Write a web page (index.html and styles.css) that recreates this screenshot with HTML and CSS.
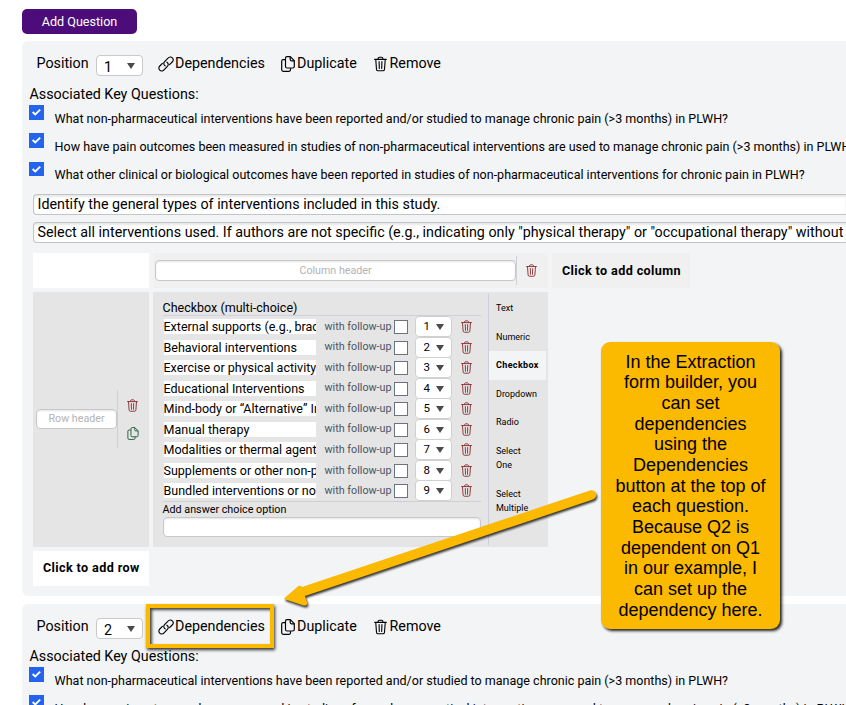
FILE: index.html
```html
<!DOCTYPE html>
<html lang="en">
<head>
<meta charset="utf-8">
<title>Extraction form builder</title>
<link rel="stylesheet" href="styles.css">
</head>
<body>
<svg class="defs" aria-hidden="true">
  <symbol id="link" viewBox="0 0 16 16"><g fill="none" stroke="currentColor" stroke-width="1.15" stroke-linecap="round"><path d="M7.2 9.9C5.6 8.9 5.3 7 6.6 5.600L10 2.100C11.200.8 13.100.6 14.300 1.800C15.500 3 15.400 4.800 14.200 6L11.600 8.600"/><path d="M8.900 6.200C10.500 7.200 10.700 9 9.400 10.400L6 13.900C4.800 15.200 2.900 15.400 1.700 14.200C.5 13 .6 11.200 1.800 10L4.400 7.400"/></g></symbol>
  <symbol id="copy" viewBox="0 0 14 16"><g fill="none" stroke="currentColor" stroke-width="1.2" stroke-linejoin="round"><path d="M6 .7H9.300L13.300 4.700V10.500Q13.300 12 11.800 12H6Q4.500 12 4.500 10.500V2.200Q4.500.7 6 .7Z"/><path d="M9.200.8V3.600Q9.200 4.800 10.400 4.800H13.200"/><path d="M4.400 3.700H2.200Q.7 3.700.7 5.200V13.800Q.7 15.300 2.200 15.300H8Q9.500 15.300 9.500 13.800V12.200"/></g></symbol>
  <symbol id="trash" viewBox="0 0 14 16"><g fill="none" stroke="currentColor" stroke-width="1.2" stroke-linecap="round"><path d="M.7 3H13.300M4.300 2.800Q4.300.8 5.800.8H8.200Q9.700.8 9.700 2.800M1.900 3.200L2.700 13.800Q2.900 15.300 4.300 15.300H9.700Q11.100 15.300 11.300 13.800L12.100 3.200M5.500 5.500L5.700 12.800M8.500 5.500L8.300 12.800"/></g></symbol>
  <symbol id="check" viewBox="0 0 15 15"><path d="M3.500 7.300L6.200 9.800L11.300 4.800" fill="none" stroke="#fff" stroke-width="2"/></symbol>
</svg>
<button class="add-question">Add Question</button>

<section class="card first">
  <div class="toolbar">
    <span class="position">Position</span><span class="select big">1</span>
    <span class="action dep"><svg><use href="#link"/></svg>Dependencies</span>
    <span class="action dup"><svg><use href="#copy"/></svg>Duplicate</span>
    <span class="action"><svg><use href="#trash"/></svg>Remove</span>
  </div>
  <div class="key-title">Associated Key Questions:</div>
  <div class="key"><svg><use href="#check"/></svg><span>What non-pharmaceutical interventions have been reported and/or studied to manage chronic pain (&gt;3 months) in PLWH?</span></div>
  <div class="key"><svg><use href="#check"/></svg><span>How have pain outcomes been measured in studies of non-pharmaceutical interventions are used to manage chronic pain (&gt;3 months) in PLWH?</span></div>
  <div class="key"><svg><use href="#check"/></svg><span>What other clinical or biological outcomes have been reported in studies of non-pharmaceutical interventions for chronic pain in PLWH?</span></div>
  <div class="text-input">Identify the general types of interventions included in this study.</div>
  <div class="text-input">Select all interventions used. If authors are not specific (e.g., indicating only "physical therapy" or "occupational therapy" without</div>

  <div class="matrix">
    <div class="corner"></div>
    <div class="col-head"><span class="field">Column header</span><span class="col-tools"><svg class="red"><use href="#trash"/></svg></span></div>
    <div class="add-col">Click to add column</div>
    <div class="row-head">
      <span class="field">Row header</span>
      <span class="row-tools"><svg class="red"><use href="#trash"/></svg><svg class="green"><use href="#copy"/></svg></span>
    </div>
    <div class="cell">
      <div class="answers">
        <div class="answers-title">Checkbox (multi-choice)</div>
        <div class="options">
          <div class="option"><span class="name">External supports (e.g., brac</span><span class="follow">with follow-up</span><i></i><span class="select">1</span><svg class="red"><use href="#trash"/></svg></div>
          <div class="option"><span class="name">Behavioral interventions</span><span class="follow">with follow-up</span><i></i><span class="select">2</span><svg class="red"><use href="#trash"/></svg></div>
          <div class="option"><span class="name">Exercise or physical activity</span><span class="follow">with follow-up</span><i></i><span class="select">3</span><svg class="red"><use href="#trash"/></svg></div>
          <div class="option"><span class="name">Educational Interventions</span><span class="follow">with follow-up</span><i></i><span class="select">4</span><svg class="red"><use href="#trash"/></svg></div>
          <div class="option"><span class="name">Mind-body or “Alternative” In</span><span class="follow">with follow-up</span><i></i><span class="select">5</span><svg class="red"><use href="#trash"/></svg></div>
          <div class="option"><span class="name">Manual therapy</span><span class="follow">with follow-up</span><i></i><span class="select">6</span><svg class="red"><use href="#trash"/></svg></div>
          <div class="option"><span class="name">Modalities or thermal agent</span><span class="follow">with follow-up</span><i></i><span class="select">7</span><svg class="red"><use href="#trash"/></svg></div>
          <div class="option"><span class="name">Supplements or other non-p</span><span class="follow">with follow-up</span><i></i><span class="select">8</span><svg class="red"><use href="#trash"/></svg></div>
          <div class="option"><span class="name">Bundled interventions or no</span><span class="follow">with follow-up</span><i></i><span class="select">9</span><svg class="red"><use href="#trash"/></svg></div>
        </div>
        <div class="add-option">Add answer choice option</div>
        <div class="field add-field"></div>
      </div>
      <div class="types">
        <span>Text</span><span>Numeric</span><span class="active">Checkbox</span><span>Dropdown</span><span>Radio</span><span>Select<br>One</span><span>Select<br>Multiple</span>
      </div>
    </div>
    <div class="add-row">Click to add row</div>
  </div>
</section>

<section class="card second">
  <div class="toolbar">
    <span class="position">Position</span><span class="select big">2</span>
    <span class="action dep"><svg><use href="#link"/></svg>Dependencies</span>
    <span class="action dup"><svg><use href="#copy"/></svg>Duplicate</span>
    <span class="action"><svg><use href="#trash"/></svg>Remove</span>
  </div>
  <div class="key-title">Associated Key Questions:</div>
  <div class="key"><svg><use href="#check"/></svg><span>What non-pharmaceutical interventions have been reported and/or studied to manage chronic pain (&gt;3 months) in PLWH?</span></div>
  <div class="key"><svg><use href="#check"/></svg><span>How have pain outcomes been measured in studies of non-pharmaceutical interventions are used to manage chronic pain (&gt;3 months) in PLWH?</span></div>
</section>

<div class="highlight"></div>
<svg class="arrow" viewBox="0 0 330 130"><path d="M310.500 14L24 110" fill="none" stroke="#fbb900" stroke-width="9.500" stroke-linecap="round"/><path d="M4 117.500L18 105.500Q20 105 20.500 107L25.500 122Q25.800 124 23 123.800Z" fill="#fbb900" stroke="#fbb900" stroke-width="1.500" stroke-linejoin="round"/></svg>
<div class="callout">In the Extraction<br>form builder, you<br>can set<br>dependencies<br>using the<br>Dependencies<br>button at the top of<br>each question.<br>Because Q2 is<br>dependent on Q1<br>in our example, I<br>can set up the<br>dependency here.</div>
</body>
</html>
```
FILE: styles.css
```css
* { box-sizing: border-box; }
html { overflow: hidden; }
body {
  margin: 0;
  padding: 9px 0 0 22px;
  width: 846px;
  height: 705px;
  overflow: hidden;
  position: relative;
  background: #fff;
  color: #000;
  font: 12.53px "Roboto", sans-serif;
}
svg { display: block; flex: none; }
.defs { position: absolute; width: 0; height: 0; }
.add-question {
  display: block;
  width: 115px;
  height: 25px;
  padding: 0;
  border: 0;
  border-radius: 5px;
  background: #4c0d7b;
  color: #fff;
  font: 400 12.6px "Roboto", sans-serif;
}
.card {
  width: 824px;
  background: #f3f4f6;
  border-radius: 6px 0 0 6px;
  overflow: hidden;
}
.card.first { margin-top: 7px; height: 555px; }
.card.second { margin-top: 8px; height: 101px; border-radius: 6px 0 0 0; }
.toolbar {
  display: flex;
  height: 45px;
  padding-left: 14.5px;
  font-size: 14.3px;
  line-height: 18px;
}
.second .toolbar { height: 44px; }
.position { width: 59.5px; padding-top: 13px; }
.select {
  position: relative;
  background: #fff;
  border: 1px solid #c9c9c9;
  border-radius: 4px;
}
.select::after {
  content: "";
  position: absolute;
  border: 4px solid transparent;
  border-top: 6px solid #4a4a4a;
  border-bottom: 0;
}
.big {
  width: 47px;
  height: 21px;
  margin: 14px 15px 0 0;
  padding-left: 7px;
  line-height: 22px;
}
.big::after { right: 7px; top: 7px; }
.action { display: flex; padding-top: 13px; }
.action svg { width: 13px; height: 16px; margin: 2px 2.500px 0 0; }
.dep { width: 123px; }
.dep svg { width: 16px; margin-right: 1px; }
.dup { width: 93px; }
.dup svg { width: 14px; margin-right: 2px; }
.key-title {
  height: 19px;
  padding-left: 7.5px;
  font-size: 14.3px;
  line-height: 16px;
}
.key {
  display: flex;
  height: 28.400px;
  padding-left: 7px;
  white-space: nowrap;
}
.key svg { width: 15px; height: 14.500px; background: #2463eb; }
.key span { margin: 5.600px 0 0 10.600px; line-height: 16px; }
.text-input {
  height: 21px;
  margin: 0 0 7px 11px;
  padding-left: 3.500px;
  border: 1px solid #c3c4c6;
  border-right: 0;
  border-radius: 4px 0 0 4px;
  background: #fff;
  box-shadow: inset 0 2px 2px #e8e8e8;
  font-size: 14.3px;
  line-height: 19px;
  white-space: nowrap;
}
.key + .text-input { margin-top: 3.800px; }
.matrix {
  display: grid;
  grid-template-columns: 116px 395px 138px;
  grid-template-rows: 35px 255px 35px;
  gap: 4px;
  margin: 10px 0 0 11px;
}
.corner { background: #fff; }
.col-head { display: flex; padding: 3px 0 3px 2px; background: #f0f0f0; }
.add-col, .add-row {
  padding-left: 10px;
  background: #f0f0f0;
  font-size: 12.6px;
  font-weight: 700;
  letter-spacing: .38px;
  line-height: 35px;
  white-space: nowrap;
}
.add-row { grid-column: 1; background: #fff; line-height: 33px; }
.field {
  border: 1px solid #c8c8ca;
  border-radius: 4px;
  background: #fff;
  box-shadow: inset 0 1px 2px #e4e4e4;
  color: #b3b3b3;
  font-size: 10.7px;
  text-align: center;
}
.col-head .field { width: 361px; height: 21px; margin-top: 4px; line-height: 19px; }
.col-tools { padding: 8px 0 0 8.500px; border-left: 1px solid #d1d2d9; }
.col-tools svg { width: 11px; height: 13px; }
.red { color: #8b3235; }
.green { color: #276343; }
.row-head { display: flex; align-items: center; padding: 0 0 1px 3px; background: #e5e5e5; }
.row-head .field { width: 81px; height: 20px; line-height: 18px; }
.row-tools {
  display: flex;
  flex-direction: column;
  height: 58px;
  gap: 15px;
  padding: 9px 0 0 8.500px;
  border-left: 1px solid #ceced6;
}
.row-tools svg { width: 11px; height: 13px; }
.row-tools svg.green { width: 12px; }
.cell { display: flex; background: #e5e5e5; }
.answers { width: 335px; padding: 7px 7px 0 10px; }
.answers-title { height: 17px; margin-left: -.5px; line-height: 17px; border-bottom: 1px solid #d0d0da; }
.options { border-bottom: 1px solid #cfcfd5; }
.option { display: flex; height: 20.570px; }
.name {
  width: 152.500px;
  height: 15px;
  margin: 3px 0 0 .5px;
  background: #fff;
  line-height: 15px;
  white-space: nowrap;
  overflow: hidden;
}
.follow { width: 69.500px; margin: 3.600px 0 0 8.500px; color: #4b5563; font-size: 10.75px; line-height: 14px; white-space: nowrap; }
.option i { width: 14px; height: 14px; margin: 4px 7px 0 0; border: 1px solid #6b7280; background: #fff; }
.option .select { width: 37px; height: 21px; padding-left: 7.500px; border-color: #d0d0d0; font-size: 11.500px; line-height: 19px; }
.option .select::after { right: 7px; top: 7px; }
.option svg { width: 11px; height: 13px; margin: 4px 0 0 8.500px; }
.add-option { height: 15px; margin-left: -.5px; font-size: 10.75px; line-height: 15px; }
.add-field { height: 20px; }
.types {
  width: 58px;
  height: 251px;
  margin-top: 2px;
  border-left: 1px solid #cdced8;
  font-size: 9px;
  line-height: 14.200px;
}
.types span { display: block; padding: 7.200px 0 7.200px 7px; }
.types .active { background: #f3f4f6; font-weight: 700; letter-spacing: .35px; }
.highlight {
  position: absolute;
  left: 146px;
  top: 604px;
  width: 128px;
  height: 44px;
  border: 4px solid #fbb900;
  box-shadow: 1px 2px 3px #333, inset 2px 2px 3px #444;
}
.arrow {
  position: absolute;
  left: 281px;
  top: 481px;
  width: 330px;
  height: 130px;
  filter: drop-shadow(1px 2px 1px #333);
}
.callout {
  position: absolute;
  left: 601px;
  top: 342px;
  width: 179px;
  height: 287px;
  padding-top: 9.500px;
  border-radius: 9px;
  background: #fbb900;
  box-shadow: 2px 2px 3px #222;
  font: 18px/20.680px "Liberation Sans", sans-serif;
  text-align: center;
  white-space: nowrap;
}
```
